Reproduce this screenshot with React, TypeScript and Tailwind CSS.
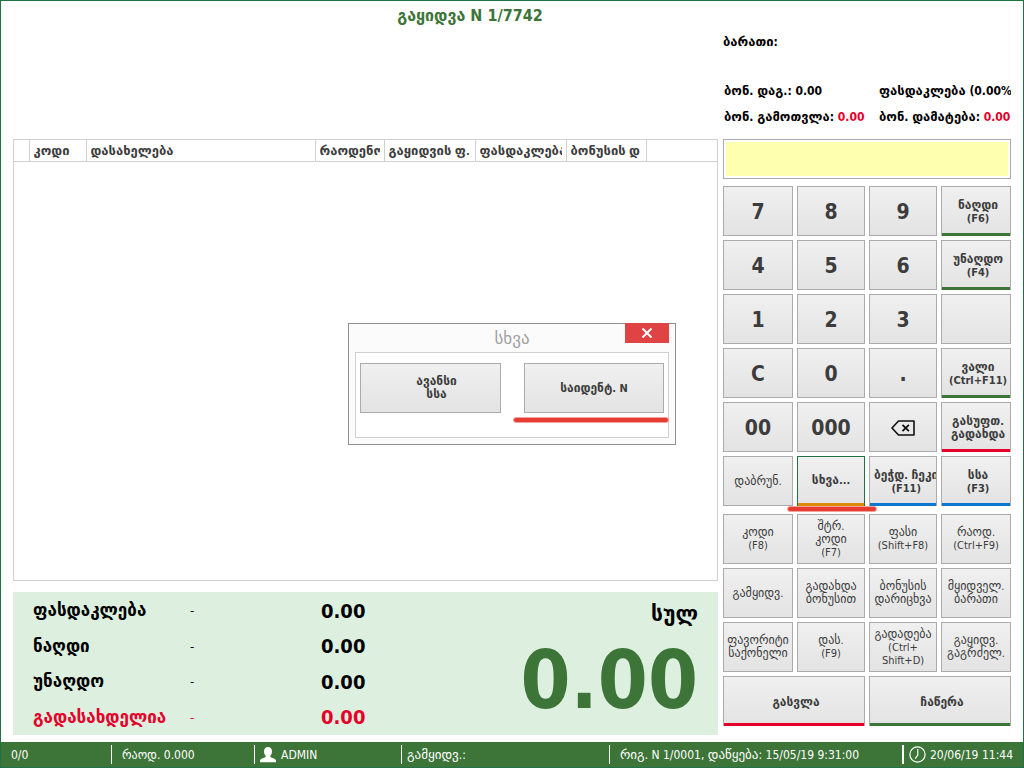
import React from "react";

type Accent = "green" | "red" | "blue" | "orange" | "none";
type Tone = "digit" | "bold" | "normal";

interface Key {
  label: string;
  tone: Tone;
  accent?: Accent;
  focused?: boolean;
  wide?: boolean;
}

const accentClass: Record<Accent, string> = {
  green: "bg-[#3d7438]",
  red: "bg-[#e4002b]",
  blue: "bg-[#0a78d0]",
  orange: "bg-[#dd8a00]",
  none: "bg-transparent",
};

const toneClass: Record<Tone, string> = {
  digit: "pt-0.5 text-[21px] leading-6 font-bold",
  bold: "text-[11px] leading-[13px] font-bold",
  normal: "text-[11px] leading-[13px]",
};

const upperKeys: Key[] = [
  { label: "7", tone: "digit" },
  { label: "8", tone: "digit" },
  { label: "9", tone: "digit" },
  { label: "ნაღდი\n(F6)", tone: "bold", accent: "green" },
  { label: "4", tone: "digit" },
  { label: "5", tone: "digit" },
  { label: "6", tone: "digit" },
  { label: "უნაღდო\n(F4)", tone: "bold", accent: "green" },
  { label: "1", tone: "digit" },
  { label: "2", tone: "digit" },
  { label: "3", tone: "digit" },
  { label: "", tone: "bold" },
  { label: "C", tone: "digit" },
  { label: "0", tone: "digit" },
  { label: ".", tone: "digit" },
  { label: "ვალი\n(Ctrl+F11)", tone: "bold", accent: "green" },
  { label: "00", tone: "digit" },
  { label: "000", tone: "digit" },
  { label: "backspace", tone: "digit" },
  { label: "გასუფთ.\nგადახდა", tone: "bold", accent: "red" },
  { label: "დაბრუნ.", tone: "normal" },
  { label: "სხვა...", tone: "bold", accent: "orange", focused: true },
  { label: "ბეჭდ. ჩეკი\n(F11)", tone: "bold", accent: "blue" },
  { label: "სსა\n(F3)", tone: "bold", accent: "blue" },
];

const lowerKeys: Key[] = [
  { label: "კოდი\n(F8)", tone: "normal" },
  { label: "შტრ.\nკოდი\n(F7)", tone: "normal" },
  { label: "ფასი\n(Shift+F8)", tone: "normal" },
  { label: "რაოდ.\n(Ctrl+F9)", tone: "normal" },
  { label: "გამყიდვ.", tone: "normal" },
  { label: "გადახდა\nბონუსით", tone: "normal" },
  { label: "ბონუსის\nდარიცხვა", tone: "normal" },
  { label: "მყიდველ.\nბარათი", tone: "normal" },
  { label: "ფავორიტი\nსაქონელი", tone: "normal" },
  { label: "დას.\n(F9)", tone: "normal" },
  { label: "გადადება\n(Ctrl+\nShift+D)", tone: "normal" },
  { label: "გაყიდვ.\nგაგრძელ.", tone: "normal" },
  { label: "გასვლა", tone: "bold", accent: "red", wide: true },
  { label: "ჩაწერა", tone: "bold", accent: "green", wide: true },
];

/* Georgian runs are set in the wide face, a step larger than the condensed Latin around them. */
function Label({ text, size }: { text: string; size: string }) {
  return (
    <span>
      {text.split(/([\u10A0-\u10FF]+)/).map((run, i) =>
        i % 2 === 1 ? (
          <span key={i} className={`font-['DejaVu_Sans',sans-serif] ${size}`}>
            {run}
          </span>
        ) : (
          run
        ),
      )}
    </span>
  );
}

function BackspaceIcon() {
  return (
    <svg width="24" height="16" viewBox="0 0 24 16" fill="none" stroke="#111" strokeWidth="1.6">
      <path d="M7.500 1H23v14H7.500L1 8z" strokeLinejoin="round" />
      <path d="M11.500 4.800l6.400 6.400M17.900 4.800l-6.400 6.400" strokeWidth="1.8" />
    </svg>
  );
}

function KeyButton({ item }: { item: Key }) {
  const accent = item.accent ?? "none";
  return (
    <button
      type="button"
      aria-label={item.label === "backspace" ? "Backspace" : undefined}
      className={`flex h-[50px] min-w-0 flex-col overflow-hidden border bg-gradient-to-b from-[#f0f0f0] to-[#e3e3e3] text-[#3c3c3c] ${
        item.focused ? "border-[#217346]" : "border-[#ababab]"
      } ${accent === "none" ? "" : "border-b-0"} ${item.wide ? "col-span-2" : ""}`}
    >
      <span
        className={`flex min-h-0 w-full flex-1 items-center [justify-content:safe_center] text-center whitespace-pre ${
          accent === "none" || item.focused ? "" : "pt-1 pl-1"
        } ${toneClass[item.tone]}`}
      >
        {item.label === "backspace" ? <BackspaceIcon /> : <Label text={item.label} size="text-[12px]" />}
      </span>
      {accent !== "none" && <span className={`h-[3px] w-full shrink-0 ${accentClass[accent]}`} />}
    </button>
  );
}

const gridClass = "grid grid-cols-[70fr_68fr_68fr_70fr] gap-1";

const columns = [
  { label: "", width: "w-[15px]" },
  { label: "კოდი", width: "w-[57px]" },
  { label: "დასახელება", width: "w-[229px]" },
  { label: "რაოდენობა", width: "w-[69px]" },
  { label: "გაყიდვის ფ.", width: "w-[91px]" },
  { label: "ფასდაკლება", width: "w-[91px]" },
  { label: "ბონუსის დ", width: "w-[80px]" },
  { label: "", width: "" },
];

const totals = [
  { label: "ფასდაკლება", value: "0.00", color: "text-black" },
  { label: "ნაღდი", value: "0.00", color: "text-black" },
  { label: "უნაღდო", value: "0.00", color: "text-black" },
  { label: "გადასახდელია", value: "0.00", color: "text-[#e4002b]" },
];

function ItemsPanel() {
  return (
    <section className="flex-1 border border-[#d0d0d0]">
      <table className="w-full table-fixed border-collapse text-left text-[11px] leading-4 text-[#3c3c3c]">
        <thead>
          <tr className="h-[21px] border-b border-[#d0d0d0]">
            {columns.map((column, i) => (
              <th
                key={i}
                className={`border-r border-[#d0d0d0] pt-0.5 pr-1 pb-0 pl-1 last:border-r-0 ${column.width}`}
              >
                <div className="overflow-hidden whitespace-nowrap">
                  <Label text={column.label} size="text-[13px]" />
                </div>
              </th>
            ))}
          </tr>
        </thead>
      </table>
    </section>
  );
}

function TotalsPanel() {
  return (
    <section className="flex h-[143px] justify-between bg-[#ddf0e0] pr-5 pl-5">
      <dl className="flex flex-col pt-px">
        {totals.map((row) => (
          <div key={row.label} className={`flex min-h-0 flex-1 items-center ${row.color}`}>
            <dt className="w-[157px] text-[15px] font-bold">
              <Label text={row.label} size="text-[17px]" />
            </dt>
            <dd className="w-[131px] text-[13px]">-</dd>
            <dd className="text-[20px] font-bold">{row.value}</dd>
          </div>
        ))}
      </dl>
      <div className="flex flex-col items-end font-bold">
        <div className="pt-2 text-[18px] leading-7 text-black">
          <Label text="სულ" size="text-[21px]" />
        </div>
        <div className="pt-3 text-[80px] leading-[80px] text-[#3d7438]">0.00</div>
      </div>
    </section>
  );
}

function SidePanel() {
  return (
    <aside className="flex w-[288px] shrink-0 flex-col">
      <div className="h-[138px] overflow-hidden text-[12px] leading-4 font-bold text-black">
        <div className="pt-[33px]">
          <Label text="ბარათი:" size="text-[13px]" />
        </div>
        <div className="grid grid-cols-[155fr_132fr] gap-y-[10px] pt-[33px] pl-px whitespace-nowrap">
          <div>
            <Label text="ბონ. დაგ.: 0.00" size="text-[13px]" />
          </div>
          <div className="overflow-hidden">
            <Label text="ფასდაკლება (0.00%)" size="text-[13px]" />
          </div>
          <div>
            <Label text="ბონ. გამოთვლა: " size="text-[13px]" />
            <span className="text-[#e4002b]">0.00</span>
          </div>
          <div className="overflow-hidden">
            <Label text="ბონ. დამატება: " size="text-[13px]" />
            <span className="text-[#e4002b]">0.00</span>
          </div>
        </div>
      </div>
      <div className="h-10 border border-[#ababab] p-0.5">
        <input aria-label="კოდი" className="block h-full w-full bg-[#ffffb0] px-2 text-[20px] outline-none" />
      </div>
      <div className={`mt-[7px] ${gridClass}`}>
        {upperKeys.map((item, i) => (
          <KeyButton key={i} item={item} />
        ))}
      </div>
      <div className={`mt-2 ${gridClass}`}>
        {lowerKeys.map((item, i) => (
          <KeyButton key={i} item={item} />
        ))}
      </div>
    </aside>
  );
}

function OtherDialog() {
  return (
    <div className="absolute inset-0 flex items-center justify-center">
      <div
        role="dialog"
        aria-labelledby="other-title"
        className="flex h-[122px] w-[328px] flex-col border border-[#8f8f8f] bg-[#fbfbfb] px-1.5 pb-1.5"
      >
        <header className="relative flex h-7 shrink-0 justify-center">
          <h2 id="other-title" className="pt-1 text-[16px] leading-5 text-[#a0a0a0]">
            <Label text="სხვა" size="text-[17px]" />
          </h2>
          <button
            type="button"
            aria-label="დახურვა"
            className="absolute -top-px right-0 flex h-5 w-11 items-center justify-center bg-[#e04343]"
          >
            <svg width="10" height="10" viewBox="0 0 10 10" stroke="white" strokeWidth="2">
              <path d="M0.5 0.5l9 9M9.5 0.5l-9 9" />
            </svg>
          </button>
        </header>
        <div className="flex flex-1 items-start justify-between border border-[#d0d0d0] bg-white px-1 pt-[10px]">
          <button
            type="button"
            className="h-[50px] w-[141px] border border-[#ababab] bg-gradient-to-b from-[#f0f0f0] to-[#e3e3e3] pl-3 text-[11px] leading-[13px] font-bold whitespace-pre text-[#3c3c3c]"
          >
            <Label text={"ავანსი\nსსა"} size="text-[12px]" />
          </button>
          <div className="relative">
            <button
              type="button"
              className="h-[50px] w-[140px] border border-[#ababab] bg-gradient-to-b from-[#f0f0f0] to-[#e3e3e3] text-[11px] leading-[13px] font-bold text-[#3c3c3c]"
            >
              <Label text="საიდენტ. N" size="text-[12px]" />
            </button>
            <div className="absolute top-[54px] -left-[11px] h-[6px] w-[156px] rounded-full border border-[#f3a39d] bg-[#e63c32]" />
          </div>
        </div>
      </div>
    </div>
  );
}

function StatusBar() {
  return (
    <footer className="grid h-[25px] grid-cols-[110fr_143fr_147fr_208fr_293fr_121fr] items-center bg-[#3d7438] text-[12px] whitespace-nowrap text-white">
      <div className="pl-[10px]">0/0</div>
      <div className="flex h-[19px] items-center border-l border-white pl-[10px]">
        <Label text="რაოდ. 0.000" size="text-[12px]" />
      </div>
      <div className="flex h-[19px] items-center gap-[5px] border-l border-white pl-[5px]">
        <svg width="16" height="16" viewBox="0 0 16 16" fill="white">
          <path d="M8 0c2.500 0 4 1.700 4 4.200 0 2-.7 3.700-1.700 4.700v1.100c.7.9 5.700 1.200 5.700 4V15.200H0V14c0-2.800 5-3.100 5.700-4V8.900C4.700 7.900 4 6.200 4 4.200 4 1.700 5.500 0 8 0z" />
        </svg>
        <span>ADMIN</span>
      </div>
      <div className="flex h-[19px] items-center border-l border-white pl-[5px]">
        <Label text="გამყიდვ.:" size="text-[13px]" />
      </div>
      <div className="flex h-[19px] items-center border-l border-white pl-[10px]">
        <Label text="რიგ. N 1/0001, დაწყება: 15/05/19 9:31:00" size="text-[13px]" />
      </div>
      <div className="flex h-[19px] items-center gap-1 border-l-2 border-white pl-[5px]">
        <svg width="17" height="17" viewBox="0 0 17 17" fill="none" stroke="white" strokeWidth="1.200">
          <circle cx="8.500" cy="8.500" r="7.600" />
          <path d="M8.800 3v6l-2.600 3.600" />
        </svg>
        <span>20/06/19 11:44</span>
      </div>
    </footer>
  );
}

export default function App() {
  return (
    <div className="relative flex min-h-screen flex-col border border-[#217346] bg-white font-['DejaVu_Sans_Condensed','DejaVu_Sans',sans-serif]">
      <main className="flex flex-1 gap-[5px] px-3">
        <div className="flex min-w-0 flex-1 flex-col pb-[7px]">
          <h1 className="h-[138px] pt-[5px] pl-[209px] text-center text-[16px] leading-5 font-bold text-[#3d7438]">
            <Label text="გაყიდვა N 1/7742" size="text-[16px]" />
          </h1>
          <ItemsPanel />
          <div className="h-[11px]" />
          <TotalsPanel />
        </div>
        <div className="relative">
          <SidePanel />
          <div className="absolute top-[505px] left-16 h-[6px] w-[90px] rounded-full border border-[#f3a39d] bg-[#e63c32]" />
        </div>
      </main>
      <StatusBar />
      <OtherDialog />
    </div>
  );
}
